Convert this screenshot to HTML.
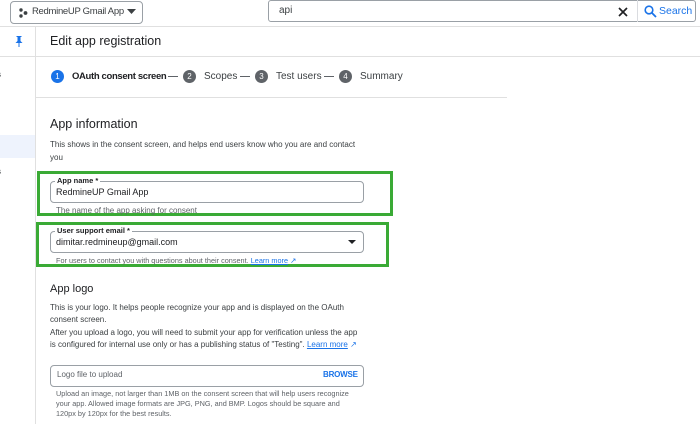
<!DOCTYPE html>
<html><head><meta charset="utf-8"><style>
*{box-sizing:border-box;margin:0;padding:0}
body{width:700px;height:424px;overflow:hidden;background:#fff;font-family:"Liberation Sans",Arial,sans-serif;color:#202124;position:relative}
.a{position:absolute}
.sm{font-size:8px;line-height:12px}
</style></head><body>
<div class="a" style="left:0;top:0;width:700px;height:27px;border-bottom:1px solid #e0e0e0"></div>
<div class="a" style="left:10px;top:1px;width:133px;height:23px;border:1px solid #9aa0a6;border-radius:4px"></div>
<svg class="a" style="left:18px;top:8px" width="10" height="10"><circle cx="3" cy="2" r="1.7" fill="#3c4043"/><circle cx="3" cy="8" r="1.7" fill="#3c4043"/><circle cx="7.5" cy="5" r="1.9" fill="#3c4043"/></svg>
<div class="a" style="left:32px;top:6px;font-size:9.5px;letter-spacing:-0.3px;color:#3c4043">RedmineUP Gmail App</div>
<svg class="a" style="left:127px;top:9px" width="9" height="6"><path d="M0 0H9L4.5 5Z" fill="#3c4043"/></svg>
<div class="a" style="left:268px;top:0;width:428px;height:22px;border:1px solid #9aa0a6;border-radius:3px"></div>
<div class="a" style="left:279px;top:5px;font-size:10px;color:#3c4043">api</div>
<svg class="a" style="left:618px;top:7px" width="10" height="10"><path d="M1 1L9 9M9 1L1 9" stroke="#202124" stroke-width="1.7"/></svg>
<div class="a" style="left:637px;top:0;width:1px;height:22px;background:#dadce0"></div>
<svg class="a" style="left:644px;top:5px" width="13" height="13"><circle cx="5" cy="5" r="3.8" stroke="#1a73e8" stroke-width="1.6" fill="none"/><path d="M8 8L12 12" stroke="#1a73e8" stroke-width="1.8"/></svg>
<div class="a" style="left:659px;top:5px;font-size:10.5px;color:#1a73e8">Search</div>
<div class="a" style="left:35px;top:27px;width:1px;height:397px;background:#e0e0e0"></div>
<div class="a" style="left:0;top:56px;width:35px;height:1px;background:#e0e0e0"></div>
<div class="a" style="left:0;top:135px;width:35px;height:23px;background:#eef3fd"></div>
<svg class="a" style="left:15px;top:36px" width="8" height="11"><path d="M1.5 0H6.5V1H5.5V5L7.5 7H4.5V11H3.5V7H0.5L2.5 5V1H1.5Z" fill="#1a73e8"/></svg>
<div class="a sm" style="left:-3px;top:69px;color:#3c4043">s</div>
<div class="a sm" style="left:-3px;top:166px;color:#3c4043">s</div>
<div class="a" style="left:50px;top:34px;font-size:12.5px">Edit app registration</div>
<div class="a" style="left:36px;top:56px;width:664px;height:1px;background:#e0e0e0"></div>
<div class="a" style="left:51px;top:70px;width:13px;height:13px;border-radius:50%;background:#1a73e8;color:#fff;font-size:8px;text-align:center;line-height:13px">1</div>
<div class="a" style="left:72px;top:71px;font-size:9.5px;letter-spacing:-0.35px;font-weight:bold">OAuth consent screen</div>
<div class="a" style="left:168px;top:76px;width:10px;height:1px;background:#5f6368"></div>
<div class="a" style="left:183px;top:70px;width:13px;height:13px;border-radius:50%;background:#5f6368;color:#fff;font-size:8px;text-align:center;line-height:13px">2</div>
<div class="a" style="left:204px;top:71px;font-size:10px;color:#3c4043">Scopes</div>
<div class="a" style="left:240px;top:76px;width:10px;height:1px;background:#5f6368"></div>
<div class="a" style="left:255px;top:70px;width:13px;height:13px;border-radius:50%;background:#5f6368;color:#fff;font-size:8px;text-align:center;line-height:13px">3</div>
<div class="a" style="left:276px;top:71px;font-size:10px;color:#3c4043">Test users</div>
<div class="a" style="left:324px;top:76px;width:10px;height:1px;background:#5f6368"></div>
<div class="a" style="left:339px;top:70px;width:13px;height:13px;border-radius:50%;background:#5f6368;color:#fff;font-size:8px;text-align:center;line-height:13px">4</div>
<div class="a" style="left:360px;top:71px;font-size:10px;color:#3c4043">Summary</div>
<div class="a" style="left:36px;top:97px;width:471px;height:1px;background:#e0e0e0"></div>
<div class="a" style="left:50px;top:117px;font-size:12.5px">App information</div>
<div class="a sm" style="left:50px;top:139px;width:320px;color:#3c4043;line-height:12.5px">This shows in the consent screen, and helps end users know who you are and contact you</div>
<div class="a" style="left:37px;top:171px;width:356px;height:45px;border:3px solid #3aaa35"></div>
<div class="a" style="left:50px;top:181px;width:314px;height:22px;border:1px solid #9aa0a6;border-radius:4px"></div>
<div class="a" style="left:55px;top:176px;background:#fff;padding:0 2px;font-size:7.5px;font-weight:bold">App name *</div>
<div class="a" style="left:56px;top:187px;font-size:9px">RedmineUP Gmail App</div>
<div class="a sm" style="left:56px;top:205px;color:#5f6368">The name of the app asking for consent</div>
<div class="a" style="left:36px;top:222px;width:353px;height:45px;border:3px solid #3aaa35"></div>
<div class="a" style="left:50px;top:231px;width:314px;height:22px;border:1px solid #9aa0a6;border-radius:4px"></div>
<div class="a" style="left:55px;top:226px;background:#fff;padding:0 2px;font-size:7.5px;font-weight:bold">User support email *</div>
<div class="a" style="left:56px;top:237px;font-size:9px">dimitar.redmineup@gmail.com</div>
<svg class="a" style="left:348px;top:240px" width="8" height="5"><path d="M0 0H8L4 4Z" fill="#202124"/></svg>
<div class="a" style="left:56px;top:255px;font-size:7.3px;line-height:12px;color:#5f6368">For users to contact you with questions about their consent. <span style="color:#1a73e8;text-decoration:underline">Learn more</span> <span style="color:#1a73e8">↗</span></div>
<div class="a" style="left:50px;top:283px;font-size:11px">App logo</div>
<div class="a sm" style="left:50px;top:302px;width:315px;color:#3c4043;line-height:12.3px">This is your logo. It helps people recognize your app and is displayed on the OAuth consent screen.<br>After you upload a logo, you will need to submit your app for verification unless the app is configured for internal use only or has a publishing status of "Testing". <span style="color:#1a73e8;text-decoration:underline">Learn more</span><span style="color:#1a73e8"> ↗</span></div>
<div class="a" style="left:50px;top:365px;width:314px;height:22px;border:1px solid #9aa0a6;border-radius:4px"></div>
<div class="a" style="left:57px;top:370px;font-size:8px;color:#5f6368">Logo file to upload</div>
<div class="a" style="left:323px;top:370px;font-size:8px;color:#1a73e8;font-weight:bold;letter-spacing:-0.2px">BROWSE</div>
<div class="a" style="left:56px;top:389px;width:300px;font-size:7.3px;line-height:10px;color:#5f6368">Upload an image, not larger than 1MB on the consent screen that will help users recognize your app. Allowed image formats are JPG, PNG, and BMP. Logos should be square and 120px by 120px for the best results.</div>
</body></html>
